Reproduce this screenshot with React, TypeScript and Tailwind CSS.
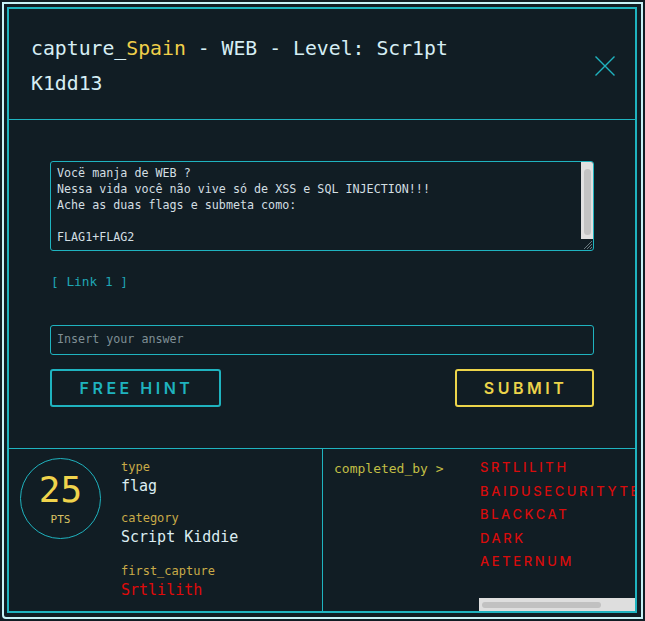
import React from "react";

const mono = { fontFamily: '"DejaVu Sans Mono", "Liberation Mono", monospace' };
const wide = { fontFamily: 'Inter, "DejaVu Sans", sans-serif' };

export default function App() {
  const names = ["SRTLILITH", "BAIDUSECURITYTEAM", "BLACKCAT", "DARK", "AETERNUM"];
  return (
    <div className="w-[645px] h-[621px] bg-[#111d24] p-[2px] overflow-hidden" style={mono}>
      <div className="h-full border-2 border-[#c8f2f7] rounded-bl-[4px] pl-[3px] pt-[3px] pb-[4px] pr-[4px]">
        <div className="h-full border-2 border-[#1fb3bf] flex flex-col">
          {/* header */}
          <div className="flex items-center justify-between pl-[22px] pr-[20px] pt-[22px] pb-[18px] border-b border-[#1fb3bf]">
            <div className="w-[490px] text-[19.8px] leading-[35px] text-[#d6eef4]">
              capture_<span className="text-[#f0cf4a]">Spain</span> - WEB - Level: Scr1pt K1dd13
            </div>
            <svg width="20" height="20" viewBox="0 0 20 20" className="mb-[1px]">
              <path d="M0.5 0.5 L19.5 19.5 M19.5 0.5 L0.5 19.5" stroke="#1fb3bf" strokeWidth="1.4" />
            </svg>
          </div>

          {/* body */}
          <div className="px-[41px] pt-[41px] pb-[41px] border-b border-[#1fb3bf]">
            <div className="relative w-[544px] h-[90px] rounded-[3px] border border-[#1fb3bf] px-[6px] pt-[3px] text-[11.7px] leading-[16px] text-[#d3dfe2] whitespace-pre overflow-hidden">
              {"Vocë manja de WEB ?\nNessa vida você não vive só de XSS e SQL INJECTION!!!\nAche as duas flags e submeta como:\n\nFLAG1+FLAG2"}
              <div className="absolute right-0 top-0 w-[12px] h-[77px] bg-[#e1e1e1] flex justify-center pt-[7px]">
                <div className="w-[7px] h-[66px] rounded-full bg-[#c3c3c3]" />
              </div>
              <svg className="absolute right-0 bottom-0" width="12" height="12" viewBox="0 0 12 12">
                <path d="M11 3 L3 11 M11 6 L6 11 M11 9 L9 11" stroke="#6b7a80" strokeWidth="1" />
              </svg>
            </div>
            <div className="mt-[22px] text-[12.8px] leading-[18px] text-[#1fa6b4] pl-[1px]">[ Link 1 ]</div>
            <div className="mt-[34px] h-[30px] w-[544px] rounded-[3px] border border-[#1fb3bf] flex items-center px-[6px] text-[11.7px] text-[#7f8f95]">
              Insert your answer
            </div>
            <div className="mt-[14px] flex justify-between">
              <div
                className="w-[171px] h-[38px] rounded-[3px] border-2 border-[#1fb3bf] flex items-center justify-center text-[16px] font-semibold tracking-[3.5px] text-[#1fb3bf] pl-[2px]"
                style={wide}
              >
                FREE HINT
              </div>
              <div
                className="w-[139px] h-[38px] rounded-[3px] border-2 border-[#ecd44a] flex items-center justify-center text-[16px] font-semibold tracking-[3.5px] text-[#ecd44a] pl-[2px]"
                style={wide}
              >
                SUBMIT
              </div>
            </div>
          </div>

          {/* footer */}
          <div className="flex-1 flex min-h-0">
            <div className="w-[314px] border-r border-[#1fb3bf] flex pl-[11px] pt-[9px]">
              <div className="w-[81px] h-[81px] rounded-full border border-[#1fb3bf] flex flex-col items-center justify-center shrink-0">
                <div className="text-[36px] leading-[36px] text-[#f0d44c] mt-[2px]">25</div>
                <div className="text-[11px] leading-[14px] text-[#d9c262] mt-[5px]">PTS</div>
              </div>
              <div className="ml-[20px] pt-[1px]">
                <div className="text-[12px] leading-[16px] text-[#c9ab48]">type</div>
                <div className="text-[15px] leading-[22px] text-[#dcedf2]">flag</div>
                <div className="mt-[13px] text-[12px] leading-[16px] text-[#c9ab48]">category</div>
                <div className="text-[15px] leading-[22px] text-[#dcedf2]">Script Kiddie</div>
                <div className="mt-[15px] text-[12px] leading-[16px] text-[#c9ab48]">first_capture</div>
                <div className="text-[15px] leading-[22px] text-[#e00a0a]">Srtlilith</div>
              </div>
            </div>
            <div className="flex-1 flex min-w-0">
              <div className="w-[156px] shrink-0 pl-[11px] pt-[12px] text-[13px] leading-[16px] text-[#c2bf45]">
                completed_by &gt;
              </div>
              <div className="relative flex-1 min-w-0 overflow-hidden">
                <div className="pt-[7px] pl-[1px] whitespace-nowrap" style={wide}>
                  {names.map((n) => (
                    <div key={n} className="text-[13px] leading-[23.5px] font-medium tracking-[2.6px] text-[#d80c0c]">
                      {n}
                    </div>
                  ))}
                </div>
                <div className="absolute left-0 right-0 bottom-0 h-[13px] bg-[#dedede] flex items-center pl-[3px]">
                  <div className="w-[119px] h-[6px] rounded-full bg-[#c1c1c1]" />
                </div>
              </div>
            </div>
          </div>
        </div>
      </div>
    </div>
  );
}
